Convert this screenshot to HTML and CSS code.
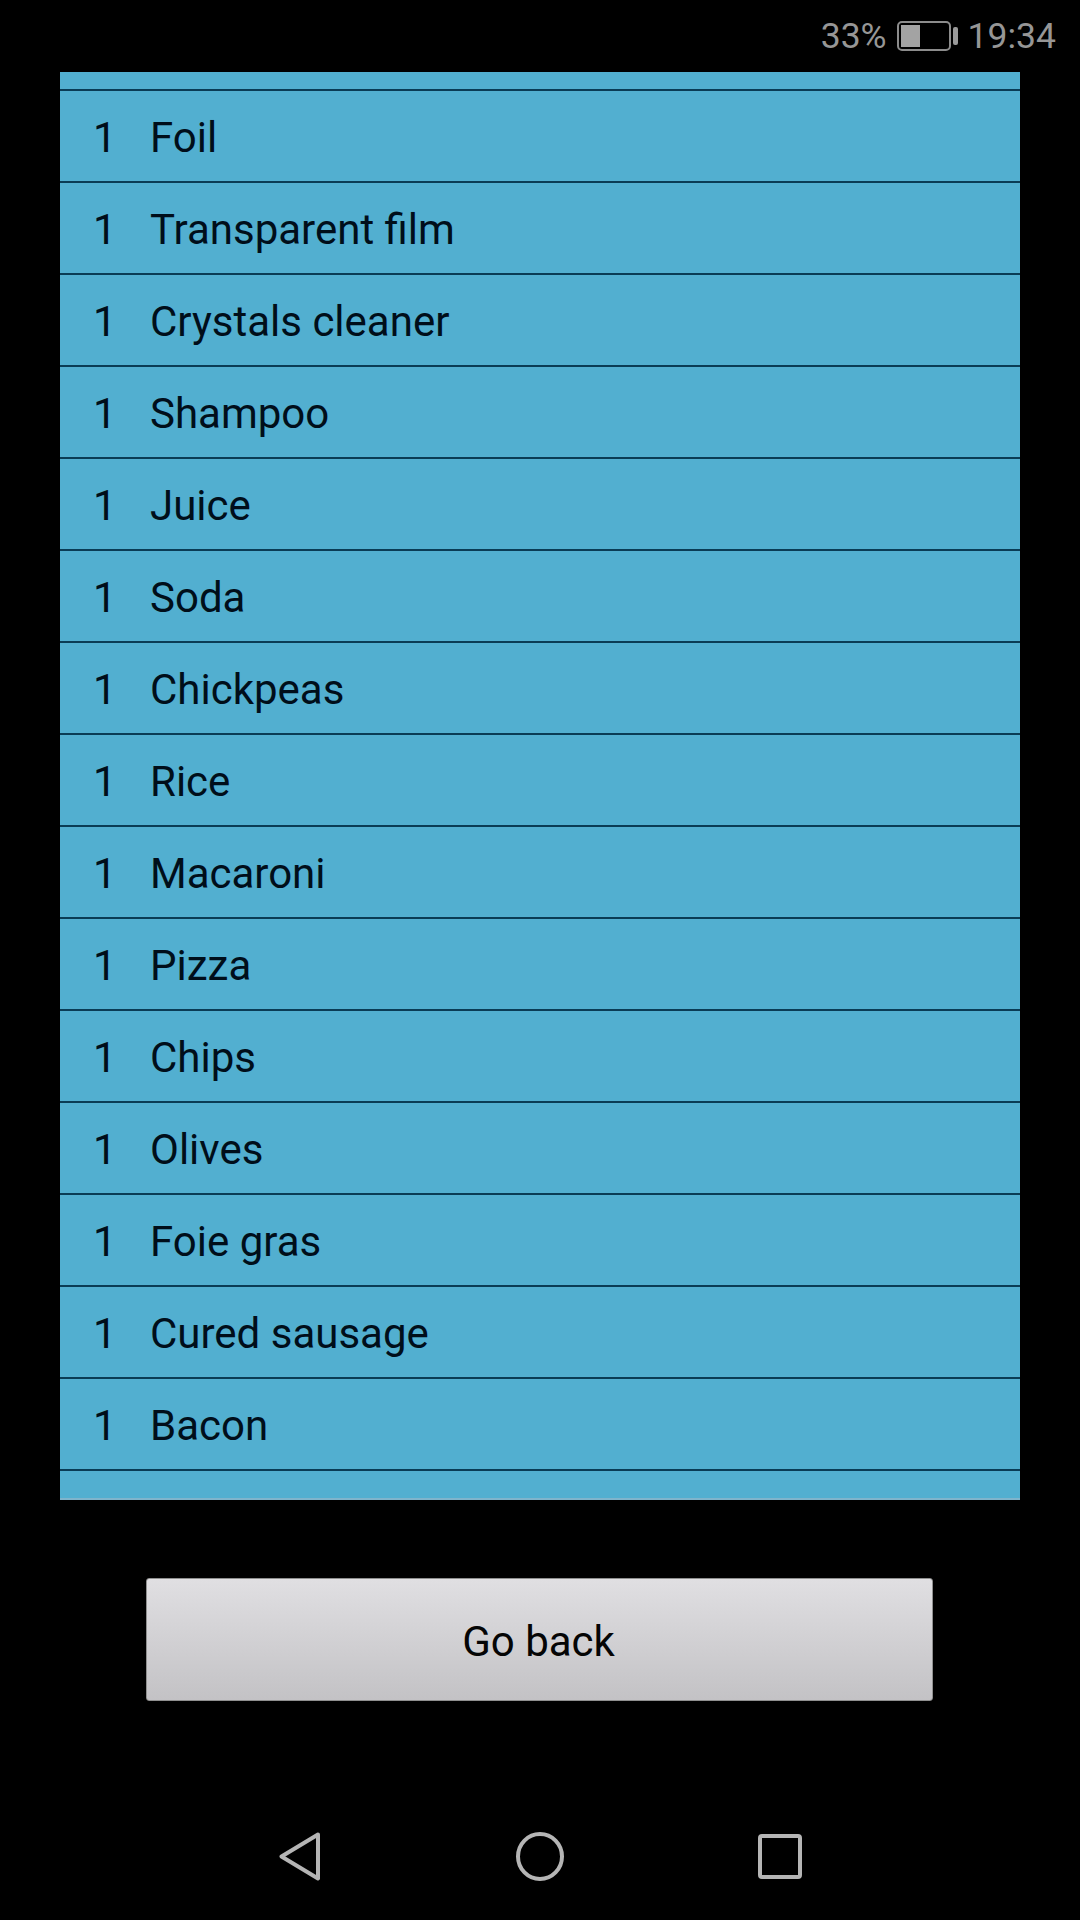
FILE: index.html
```html
<!DOCTYPE html>
<html lang="en">
<head>
<meta charset="utf-8">
<title>List</title>
<link rel="stylesheet" href="styles.css">
</head>
<body>
<div class="screen">
  <header class="status">
    <span class="pct">33%</span>
    <svg class="battery" width="61" height="30" viewBox="0 0 61 30" aria-hidden="true">
      <rect x="1" y="1" width="52" height="28" rx="4" fill="none" stroke="#8c8c8c" stroke-width="2"/>
      <rect x="4" y="4" width="19" height="22" fill="#a3a3a3"/>
      <rect x="56" y="6" width="5" height="18" rx="2" fill="#9a9a9a"/>
    </svg>
    <span class="time">19:34</span>
  </header>
  <main class="list">
    <div class="spacer"></div>
    <div class="row"><span class="qty">1</span><span class="name">Foil</span></div>
    <div class="row"><span class="qty">1</span><span class="name">Transparent film</span></div>
    <div class="row"><span class="qty">1</span><span class="name">Crystals cleaner</span></div>
    <div class="row"><span class="qty">1</span><span class="name">Shampoo</span></div>
    <div class="row"><span class="qty">1</span><span class="name">Juice</span></div>
    <div class="row"><span class="qty">1</span><span class="name">Soda</span></div>
    <div class="row"><span class="qty">1</span><span class="name">Chickpeas</span></div>
    <div class="row"><span class="qty">1</span><span class="name">Rice</span></div>
    <div class="row"><span class="qty">1</span><span class="name">Macaroni</span></div>
    <div class="row"><span class="qty">1</span><span class="name">Pizza</span></div>
    <div class="row"><span class="qty">1</span><span class="name">Chips</span></div>
    <div class="row"><span class="qty">1</span><span class="name">Olives</span></div>
    <div class="row"><span class="qty">1</span><span class="name">Foie gras</span></div>
    <div class="row"><span class="qty">1</span><span class="name">Cured sausage</span></div>
    <div class="row"><span class="qty">1</span><span class="name">Bacon</span></div>
  </main>
  <div class="action">
    <button class="back" type="button">Go back</button>
  </div>
  <nav class="nav">
    <svg class="nav-back" width="41" height="49" viewBox="0 0 41 49" aria-hidden="true">
      <path d="M39 2.500 L2.500 24.500 L39 46.500 Z" fill="none" stroke="#b5b5b5" stroke-width="4" stroke-linejoin="round"/>
    </svg>
    <svg class="nav-home" width="48" height="49" viewBox="0 0 48 49" aria-hidden="true">
      <ellipse cx="24" cy="24.500" rx="22" ry="22.500" fill="none" stroke="#b5b5b5" stroke-width="4"/>
    </svg>
    <svg class="nav-recent" width="44" height="45" viewBox="0 0 44 45" aria-hidden="true">
      <rect x="2" y="2" width="40" height="41" rx="2" fill="none" stroke="#b5b5b5" stroke-width="4"/>
    </svg>
  </nav>
</div>
</body>
</html>
```
FILE: styles.css
```css
* { box-sizing: border-box; }
html, body { margin: 0; padding: 0; background: #000; }
.screen {
  width: 1080px;
  height: 1920px;
  display: flex;
  flex-direction: column;
  background: #000;
  font-family: Roboto, "Liberation Sans", sans-serif;
  overflow: hidden;
}
.status {
  height: 72px;
  flex: none;
  display: flex;
  align-items: center;
  justify-content: flex-end;
  padding: 0 24px 0 0;
  color: #969696;
  font-size: 35.5px;
  line-height: 72px;
}
.pct { margin-right: 10px; }
.battery { margin-right: 10px; }
.list {
  flex: none;
  height: 1428px;
  margin: 0 60px;
  overflow: hidden;
  background: #52afd0;
  border-bottom: 2px solid #7fb4cb;
}
.spacer {
  height: 19px;
  border-bottom: 2px solid #0a3c55;
}
.row {
  height: 92px;
  display: flex;
  align-items: center;
  padding: 3px 0 0 33px;
  border-bottom: 2px solid #0a3c55;
  color: #000e1a;
  font-size: 42px;
}
.qty { width: 57px; flex: none; }
.action {
  flex: none;
  display: flex;
  justify-content: flex-start;
  padding: 78px 0 0 146px;
}
.back {
  width: 787px;
  height: 123px;
  border: 1px solid #8f8f8f;
  border-radius: 3px;
  background: linear-gradient(#e0dfe2, #c3c2c5);
  color: #050505;
  font-family: inherit;
  font-size: 42px;
  padding: 3px 2px 0 0;
}
.nav {
  flex: 1;
  display: flex;
  align-items: flex-start;
  padding: 131px 0 0 279px;
}
.nav-back { flex: none; margin-right: 196px; }
.nav-home { flex: none; margin-right: 194px; }
.nav-recent { flex: none; margin-top: 2px; }
```
